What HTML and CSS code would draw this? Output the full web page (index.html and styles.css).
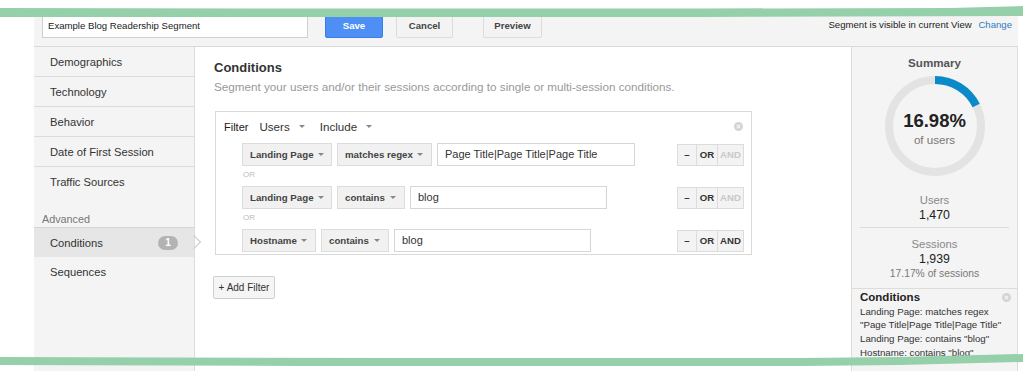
FILE: index.html
```html
<!DOCTYPE html>
<html>
<head>
<meta charset="utf-8">
<link rel="stylesheet" href="styles.css">
</head>
<body>
<div class="page">
  <div class="topbar">
    <div class="name-input">Example Blog Readership Segment</div>
    <div class="btn btn-save">Save</div>
    <div class="btn btn-cancel">Cancel</div>
    <div class="btn btn-preview">Preview</div>
    <div class="visibility">Segment is visible in current View <span class="link">Change</span></div>
  </div>
  <div class="body">
    <div class="sidebar">
      <div class="nav-item bordered">Demographics</div>
      <div class="nav-item bordered">Technology</div>
      <div class="nav-item bordered">Behavior</div>
      <div class="nav-item bordered">Date of First Session</div>
      <div class="nav-item">Traffic Sources</div>
      <div class="nav-label">Advanced</div>
      <div class="nav-item selected">Conditions <span class="badge">1</span></div>
      <div class="nav-item">Sequences</div>
    </div>
    <div class="main">
      <div class="heading">Conditions</div>
      <div class="subtitle">Segment your users and/or their sessions according to single or multi-session conditions.</div>
      <div class="filter-box">
        <div class="filter-head">
          <span class="filter-word">Filter</span>
          <span class="head-select">Users <span class="caret"></span></span>
          <span class="head-select">Include <span class="caret"></span></span>
          <span class="close-icon head-close"></span>
        </div>
        <div class="cond-row">
          <div class="select w90">Landing Page <span class="caret"></span></div>
          <div class="select w95">matches regex <span class="caret"></span></div>
          <div class="text-input w198">Page Title|Page Title|Page Title</div>
          <div class="logic">
            <span class="lg minus">–</span><span class="lg or">OR</span><span class="lg and disabled">AND</span>
          </div>
        </div>
        <div class="or-label">OR</div>
        <div class="cond-row">
          <div class="select w90">Landing Page <span class="caret"></span></div>
          <div class="select w68">contains <span class="caret"></span></div>
          <div class="text-input w197">blog</div>
          <div class="logic">
            <span class="lg minus">–</span><span class="lg or">OR</span><span class="lg and disabled">AND</span>
          </div>
        </div>
        <div class="or-label">OR</div>
        <div class="cond-row">
          <div class="select w74">Hostname <span class="caret"></span></div>
          <div class="select w68">contains <span class="caret"></span></div>
          <div class="text-input w197">blog</div>
          <div class="logic">
            <span class="lg minus">–</span><span class="lg or">OR</span><span class="lg and">AND</span>
          </div>
        </div>
      </div>
      <div class="add-filter">+ Add Filter</div>
    </div>
    <div class="summary">
      <div class="sum-title">Summary</div>
      <div class="donut">
        <svg class="donut-svg" width="102" height="102" viewBox="0 0 102 102">
          <circle cx="51" cy="51" r="46" fill="none" stroke="#e3e3e3" stroke-width="8"/>
          <path d="M51 5 A46 46 0 0 1 92.2 30.6" fill="none" stroke="#0a8ac8" stroke-width="8"/>
        </svg>
        <div class="donut-text">
          <div class="pct">16.98%</div>
          <div class="pct-sub">of users</div>
        </div>
      </div>
      <div class="stat">
        <div class="stat-label">Users</div>
        <div class="stat-value">1,470</div>
      </div>
      <div class="stat sessions">
        <div class="stat-label">Sessions</div>
        <div class="stat-value">1,939</div>
        <div class="stat-sub">17.17% of sessions</div>
      </div>
      <div class="cond-summary">
        <div class="cs-title">Conditions <span class="close-icon cs-close"></span></div>
        <div class="cs-item">Landing Page: matches regex<br>"Page Title|Page Title|Page Title"</div>
        <div class="cs-item">Landing Page: contains "blog"</div>
        <div class="cs-item">Hostname: contains "blog"</div>
      </div>
    </div>
  </div>
</div>
<svg class="marker" width="1023" height="371" viewBox="0 0 1023 371">
  <path d="M0 8 L300 8.5 L700 8.5 L950 8 L1023 6 L1023 16 L700 17 L300 17 L0 17 Z" fill="#95d0ab"/>
  <path d="M0 357 L400 358 L800 358 L900 357 L1023 354 L1023 362 L900 365 L800 366 L300 366 L0 365 Z" fill="#95d0ab"/>
</svg>
</body>
</html>
```
FILE: styles.css
```css
html, body {
  margin: 0;
  padding: 0;
  background: #ffffff;
  font-family: "Liberation Sans", Arial, sans-serif;
  color: #222;
  overflow: hidden;
}

.page {
  margin: 10px 0 0 34px;
  width: 984px;
}

.topbar {
  display: flex;
  align-items: flex-start;
  height: 37px;
  padding: 4px 6px 0 8px;
  box-sizing: border-box;
  background: #f4f4f4;
  border-bottom: 1px solid #d9d9d9;
}

.name-input {
  width: 266px;
  height: 24px;
  box-sizing: border-box;
  background: #fff;
  border: 1px solid #cfcfcf;
  font-size: 9.6px;
  line-height: 22px;
  padding-left: 5px;
  color: #222;
}

.btn {
  height: 24px;
  box-sizing: border-box;
  font-size: 9.6px;
  font-weight: bold;
  line-height: 22px;
  text-align: center;
  border-radius: 2px;
}

.btn-save {
  margin-left: 17px;
  width: 58px;
  background: #4d8ff5;
  border: 1px solid #3a7de8;
  color: #fff;
}

.btn-cancel {
  margin-left: 13px;
  width: 57px;
  background: #f3f3f3;
  border: 1px solid #dcdcdc;
  color: #444;
}

.btn-preview {
  margin-left: 30px;
  width: 59px;
  background: #f3f3f3;
  border: 1px solid #dcdcdc;
  color: #444;
}

.visibility {
  margin-left: auto;
  font-size: 9.6px;
  line-height: 22px;
  color: #222;
}

.visibility .link {
  color: #2f7bc0;
  margin-left: 4px;
}

.body {
  display: flex;
  height: 340px;
}

.sidebar {
  width: 160px;
  background: #f4f4f4;
  border-right: 1px solid #dcdcdc;
}

.nav-item {
  position: relative;
  display: flex;
  align-items: center;
  height: 30px;
  box-sizing: border-box;
  padding-left: 16px;
  font-size: 11.2px;
  color: #333;
}

.nav-item.bordered {
  border-bottom: 1px solid #dcdcdc;
}

.nav-label {
  margin-top: 15px;
  height: 15px;
  line-height: 15px;
  padding-left: 8px;
  font-size: 10.8px;
  color: #777;
}

.nav-item.selected {
  background: #e6e6e6;
  border-top: 1px solid #d6d6d6;
}

.nav-item.selected::after {
  content: "";
  position: absolute;
  right: -5px;
  top: 9px;
  width: 9px;
  height: 9px;
  border-top: 1px solid #c9c9c9;
  border-right: 1px solid #c9c9c9;
  transform: rotate(45deg);
}

.badge {
  margin-left: auto;
  margin-right: 16px;
  width: 20px;
  height: 14px;
  border-radius: 7px;
  background: #b3b3b3;
  color: #fff;
  font-size: 10px;
  font-weight: bold;
  line-height: 14px;
  text-align: center;
}

.main {
  width: 656px;
  background: #fff;
  padding: 12px 0 0 19px;
  box-sizing: border-box;
}

.heading {
  font-size: 13px;
  font-weight: bold;
  color: #333;
  line-height: 15px;
  margin-top: 1px;
}

.subtitle {
  margin-top: 4px;
  font-size: 11.7px;
  color: #999;
  line-height: 15px;
}

.filter-box {
  margin-top: 17px;
  margin-left: 1px;
  width: 537px;
  height: 144px;
  box-sizing: border-box;
  border: 1px solid #d9d9d9;
  padding: 0 7px 0 26px;
}

.filter-head {
  position: relative;
  display: flex;
  align-items: center;
  height: 29px;
  margin-left: -18px;
  font-size: 11px;
  color: #222;
}

.filter-word {
  margin-right: 11px;
}

.head-select {
  display: flex;
  align-items: center;
  margin-right: 15px;
  font-size: 11.6px;
  color: #333;
}

.caret {
  display: inline-block;
  width: 0;
  height: 0;
  margin-left: 9px;
  border-left: 3px solid transparent;
  border-right: 3px solid transparent;
  border-top: 3px solid #888;
}

.select .caret {
  margin-left: 4px;
}

.close-icon {
  display: inline-block;
  width: 9px;
  height: 9px;
  border-radius: 50%;
  background: #d4d4d4;
  position: relative;
}

.close-icon::before,
.close-icon::after {
  content: "";
  position: absolute;
  left: 4px;
  top: 2px;
  width: 1px;
  height: 5px;
  background: #fff;
  transform: rotate(45deg);
}

.close-icon::after {
  transform: rotate(-45deg);
}

.head-close {
  margin-left: auto;
  margin-right: 1px;
}

.cond-row {
  display: flex;
  align-items: center;
  height: 23px;
  margin-top: 2px;
}

.select {
  display: flex;
  align-items: center;
  justify-content: space-between;
  height: 23px;
  box-sizing: border-box;
  margin-right: 5px;
  padding: 0 8px 0 7px;
  background: #f1f1f1;
  border: 1px solid #dcdcdc;
  font-size: 9.7px;
  font-weight: bold;
  color: #444;
  white-space: nowrap;
}

.w90 { width: 90px; }
.w95 { width: 95px; }
.w74 { width: 74px; }
.w68 { width: 68px; }
.w198 { width: 198px; }
.w197 { width: 197px; }

.text-input {
  height: 23px;
  box-sizing: border-box;
  border: 1px solid #d6d6d6;
  background: #fff;
  padding-left: 7px;
  font-size: 11px;
  line-height: 21px;
  color: #333;
  white-space: nowrap;
}

.logic {
  display: flex;
  margin-left: auto;
  height: 22px;
  box-sizing: border-box;
  border: 1px solid #dcdcdc;
  background: #f3f3f3;
}

.lg {
  font-size: 9.6px;
  font-weight: bold;
  line-height: 20px;
  text-align: center;
  color: #333;
}

.lg.minus { width: 18px; border-right: 1px solid #dcdcdc; }
.lg.or { width: 20px; border-right: 1px solid #dcdcdc; }
.lg.and { width: 25px; }
.lg.disabled { color: #c8c8c8; }

.or-label {
  height: 18px;
  line-height: 17px;
  font-size: 8px;
  color: #bdbdbd;
  padding-left: 1px;
}

.add-filter {
  margin-top: 21px;
  margin-left: -1px;
  width: 62px;
  height: 23px;
  box-sizing: border-box;
  background: #f5f5f5;
  border: 1px solid #cfcfcf;
  border-radius: 2px;
  font-size: 10px;
  line-height: 21px;
  text-align: center;
  color: #333;
}

.summary {
  width: 167px;
  box-sizing: border-box;
  background: #f4f4f4;
  border-left: 1px solid #dcdcdc;
  border-right: 1px solid #dcdcdc;
  padding-top: 8px;
  text-align: center;
}

.sum-title {
  font-size: 11.6px;
  font-weight: bold;
  color: #555;
  line-height: 15px;
}

.donut {
  display: grid;
  justify-items: center;
  align-items: center;
  margin-top: 5px;
  height: 102px;
}

.donut-svg,
.donut-text {
  grid-area: 1 / 1;
}

.pct {
  font-size: 18.5px;
  font-weight: bold;
  color: #222;
  line-height: 22px;
  margin-top: 4px;
}

.pct-sub {
  font-size: 11.6px;
  color: #777;
  line-height: 15px;
}

.stat {
  margin: 16px 8px 0 8px;
  padding-bottom: 4px;
  border-bottom: 1px solid #dcdcdc;
}

.stat.sessions {
  margin-top: 9px;
  border-bottom: none;
  padding-bottom: 7px;
}

.stat-label {
  font-size: 11.3px;
  color: #888;
  line-height: 15px;
}

.stat-value {
  font-size: 12.3px;
  color: #222;
  line-height: 15px;
}

.stat-sub {
  font-size: 10.3px;
  color: #777;
  line-height: 14px;
}

.cond-summary {
  text-align: left;
  border-top: 1px solid #dcdcdc;
  padding: 1px 6px 0 8px;
}

.cs-title {
  display: flex;
  align-items: center;
  justify-content: space-between;
  font-size: 11.5px;
  font-weight: bold;
  color: #222;
  line-height: 14px;
}

.cs-close {
  margin-right: 0;
}

.cs-item {
  font-size: 9.7px;
  color: #333;
  line-height: 13px;
  margin-top: 1px;
}

.marker {
  position: absolute;
  left: 0;
  top: 0;
  pointer-events: none;
}
```
